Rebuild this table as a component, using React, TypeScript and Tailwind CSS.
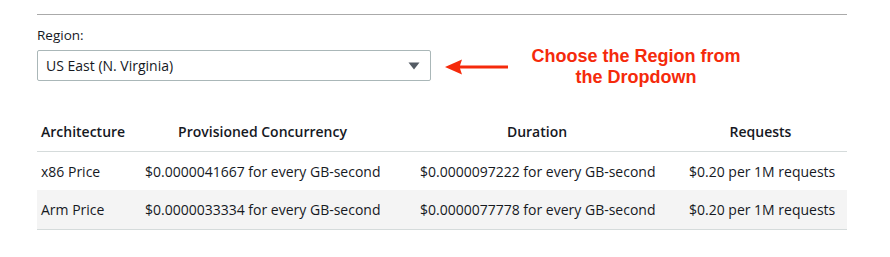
type PriceRow = {
  arch: string;
  provisioned: string;
  duration: string;
  requests: string;
};

const rows: PriceRow[] = [
  {
    arch: "x86 Price",
    provisioned: "$0.0000041667 for every GB-second",
    duration: "$0.0000097222 for every GB-second",
    requests: "$0.20 per 1M requests",
  },
  {
    arch: "Arm Price",
    provisioned: "$0.0000033334 for every GB-second",
    duration: "$0.0000077778 for every GB-second",
    requests: "$0.20 per 1M requests",
  },
];

const cols = "grid grid-cols-[104px_275px_269px_162px] items-center";

function RegionSelect() {
  return (
    <div className="shrink-0 w-[394px] h-[31px] border border-[#aab7b8] rounded-[2px] bg-white flex items-center justify-between pl-2 pr-[10px]">
      <span>US East (N. Virginia)</span>
      <svg width="12" height="8" viewBox="0 0 12 8" className="text-[#545b64]">
        <path d="M0.5 0.5 H11.5 L6 7.5 Z" fill="currentColor" />
      </svg>
    </div>
  );
}

function Callout() {
  return (
    <div className="flex items-center mt-[-4px] h-[42px] shrink-0">
      <svg width="63" height="16" viewBox="0 0 63 16" className="ml-[14px]">
        <path d="M0 8 L17 0.5 L15 6.5 H63 V9.5 H15 L17 15.5 Z" fill="#f52a0b" />
      </svg>
      <div className="ml-[22px] w-[212px] text-center font-['Liberation_Sans',Arial,sans-serif] font-bold text-[18px] leading-[21px] text-[#f52a0b]">
        Choose the Region from
        <br />
        the Dropdown
      </div>
    </div>
  );
}

export default function App() {
  return (
    <div className="w-[890px] h-[257px] bg-white pl-[37px] pr-[43px] pt-[14px] font-['Open_Sans',sans-serif] text-[14px] text-[#16191f]">
      <div className="border-t border-[#aaaaaa]" />

      <div className="mt-[10px] leading-[20px] text-[13.5px]">Region:</div>

      <div className="mt-[5px] h-[31px] flex items-start">
        <RegionSelect />
        <Callout />
      </div>

      <div className="mt-[30px]">
        <div className={`${cols} h-[41px] border-b border-[#d5dbdb] font-semibold`}>
          <div className="pl-1">Architecture</div>
          <div className="pl-1 pr-[36px] text-center">Provisioned Concurrency</div>
          <div className="pl-1 pr-[31px] text-center">Duration</div>
          <div className="pl-1 pr-[15px] text-center">Requests</div>
        </div>
        {rows.map((r, i) => (
          <div
            key={r.arch}
            className={
              i % 2 === 1
                ? `${cols} h-[40px] bg-[#f4f4f4] border-b border-[#d5dbdb]`
                : `${cols} h-[38px]`
            }
          >
            <div className="pl-1">{r.arch}</div>
            <div className="pl-1">{r.provisioned}</div>
            <div className="pl-1">{r.duration}</div>
            <div className="pl-1">{r.requests}</div>
          </div>
        ))}
      </div>
    </div>
  );
}
